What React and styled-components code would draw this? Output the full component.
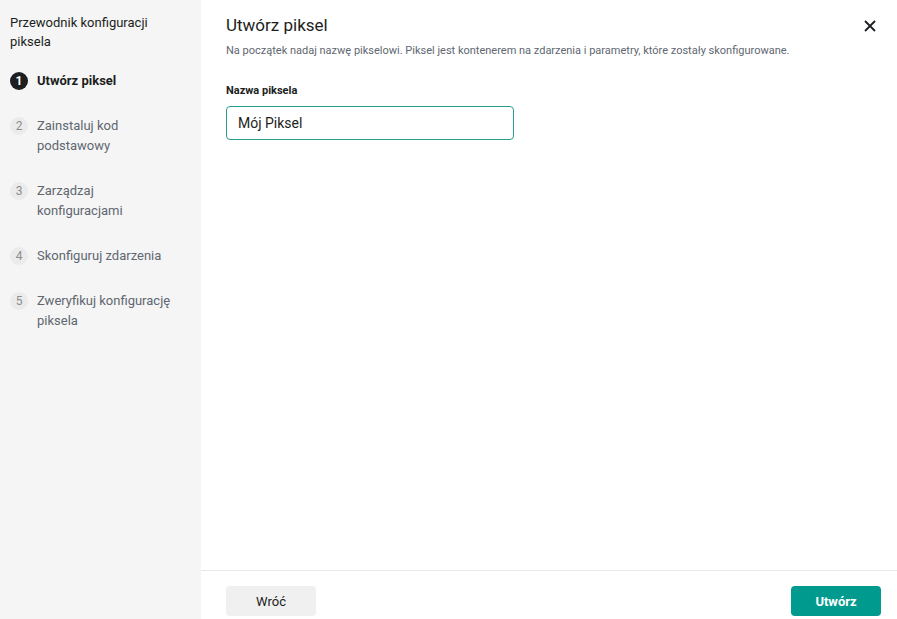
import React from 'react';
import styled, { createGlobalStyle } from 'styled-components';

const GlobalStyle = createGlobalStyle`
  html, body {
    margin: 0;
    padding: 0;
    background: #fff;
  }
  body {
    font-family: Roboto, "Liberation Sans", Arial, sans-serif;
    color: #1c1e21;
  }
`;

const Layout = styled.div`
  display: flex;
  width: 897px;
  height: 619px;
  overflow: hidden;
`;

const Sidebar = styled.aside`
  width: 201px;
  flex-shrink: 0;
  background: #f5f5f5;
  padding: 13px 10px 0 10px;
  box-sizing: border-box;
`;

const SidebarTitle = styled.div`
  font-size: 13px;
  line-height: 19px;
  color: #1c1e21;
  margin-bottom: 20px;
`;

const StepList = styled.ol`
  list-style: none;
  margin: 0;
  padding: 0;
  display: flex;
  flex-direction: column;
  gap: 25px;
`;

const Step = styled.li`
  display: flex;
  gap: 9px;
  align-items: flex-start;
`;

const StepNumber = styled.span`
  width: 18px;
  height: 18px;
  border-radius: 50%;
  flex-shrink: 0;
  margin-top: 1px;
  display: flex;
  align-items: center;
  justify-content: center;
  font-size: 12px;
  font-weight: ${(p) => (p.active ? 700 : 400)};
  background: ${(p) => (p.active ? '#1c1e21' : '#ebebeb')};
  color: ${(p) => (p.active ? '#fff' : '#8a8d91')};
`;

const StepLabel = styled.span`
  max-width: 140px;
  font-size: 13px;
  line-height: 20px;
  font-weight: ${(p) => (p.active ? 700 : 400)};
  color: ${(p) => (p.active ? '#1c1e21' : '#606770')};
`;

const Main = styled.section`
  flex: 1;
  display: flex;
  flex-direction: column;
`;

const Body = styled.div`
  flex: 1;
  padding: 14px 19px 0 25px;
`;

const Header = styled.div`
  display: flex;
  justify-content: space-between;
  align-items: flex-start;
`;

const Title = styled.h2`
  margin: 0;
  font-size: 17px;
  line-height: 22px;
  font-weight: 400;
  color: #1c1e21;
`;

const CloseButton = styled.button`
  border: none;
  background: none;
  padding: 0;
  margin-top: 4px;
  width: 16px;
  height: 16px;
  display: flex;
  align-items: center;
  justify-content: center;
  cursor: pointer;
`;

const Subtitle = styled.p`
  margin: 7px 0 0 0;
  font-size: 11px;
  line-height: 16px;
  color: #606770;
`;

const Field = styled.div`
  margin-top: 25px;
`;

const Label = styled.label`
  display: block;
  font-size: 11px;
  line-height: 14px;
  font-weight: 700;
  color: #1c1e21;
  margin-bottom: 8px;
`;

const TextInput = styled.input`
  display: block;
  width: 288px;
  height: 34px;
  box-sizing: border-box;
  border: 1px solid #2a9d8f;
  border-radius: 4px;
  padding: 0 11px;
  font-family: inherit;
  font-size: 14px;
  color: #1c1e21;
  outline: none;
`;

const Footer = styled.div`
  box-sizing: border-box;
  border-top: 1px solid #e8e8e8;
  height: 49px;
  padding: 15px 16px 0 25px;
  display: flex;
  justify-content: space-between;
  align-items: flex-start;
`;

const FooterButton = styled.button`
  width: 90px;
  height: 30px;
  border: none;
  border-radius: 4px;
  font-family: inherit;
  font-size: 13px;
  font-weight: ${(p) => (p.primary ? 700 : 400)};
  background: ${(p) => (p.primary ? '#009a8f' : '#f0f0f0')};
  color: ${(p) => (p.primary ? '#fff' : '#1c1e21')};
  cursor: pointer;
`;

const steps = [
  'Utwórz piksel',
  'Zainstaluj kod podstawowy',
  'Zarządzaj konfiguracjami',
  'Skonfiguruj zdarzenia',
  'Zweryfikuj konfigurację piksela',
];

export default function App() {
  return (
    <>
      <GlobalStyle />
      <Layout>
        <Sidebar>
          <SidebarTitle>Przewodnik konfiguracji piksela</SidebarTitle>
          <StepList>
            {steps.map((label, i) => (
              <Step key={label}>
                <StepNumber active={i === 0}>{i + 1}</StepNumber>
                <StepLabel active={i === 0}>{label}</StepLabel>
              </Step>
            ))}
          </StepList>
        </Sidebar>
        <Main>
          <Body>
            <Header>
              <Title>Utwórz piksel</Title>
              <CloseButton aria-label="Zamknij">
                <svg width="12" height="12" viewBox="0 0 12 12">
                  <path d="M1 1L11 11M11 1L1 11" stroke="#1c1e21" strokeWidth="1.8" />
                </svg>
              </CloseButton>
            </Header>
            <Subtitle>
              Na początek nadaj nazwę pikselowi. Piksel jest kontenerem na zdarzenia i parametry, które zostały skonfigurowane.
            </Subtitle>
            <Field>
              <Label htmlFor="pixel-name">Nazwa piksela</Label>
              <TextInput id="pixel-name" type="text" defaultValue="Mój Piksel" />
            </Field>
          </Body>
          <Footer>
            <FooterButton>Wróć</FooterButton>
            <FooterButton primary>Utwórz</FooterButton>
          </Footer>
        </Main>
      </Layout>
    </>
  );
}
